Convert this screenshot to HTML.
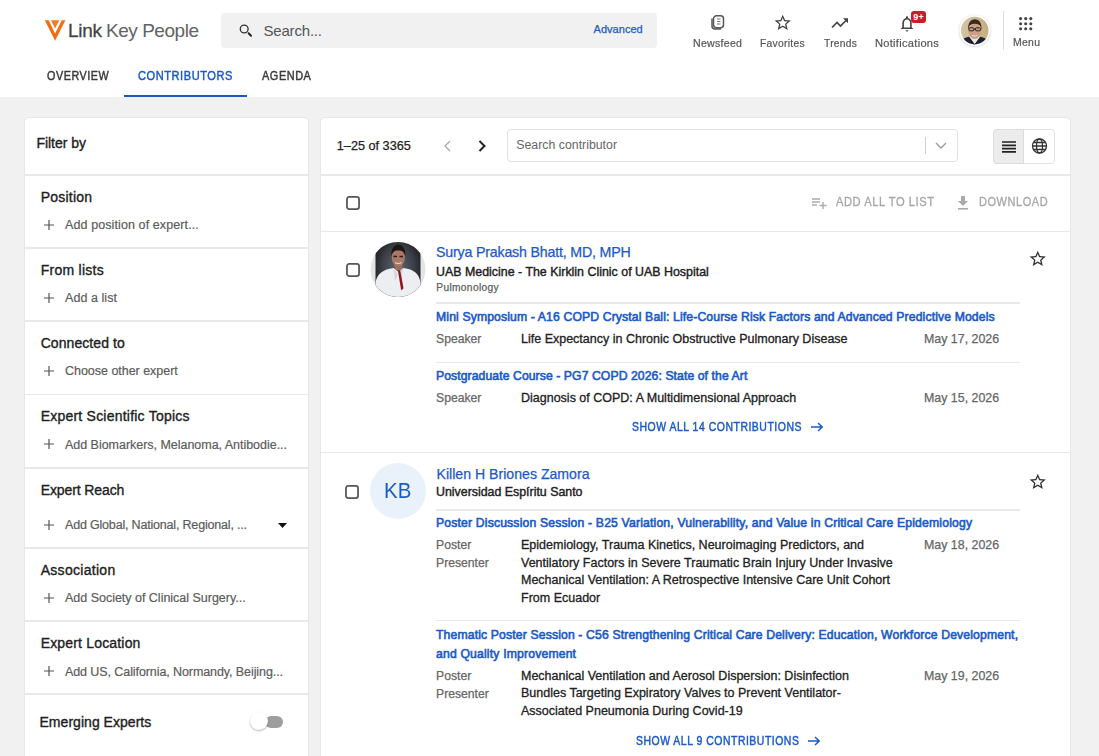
<!DOCTYPE html>
<html><head><meta charset="utf-8"><title>Link Key People - Contributors</title>
<style>
html,body{margin:0;padding:0;}
body{width:1099px;height:756px;overflow:hidden;position:relative;background:#fff;font-family:"Liberation Sans",sans-serif;}
.t{position:absolute;white-space:nowrap;line-height:1;}
.r{position:absolute;display:block;}
</style></head><body>
<div class="r" style="left:0px;top:97px;width:1099px;height:659px;background:#f1f1f1;"></div>
<svg class="r" style="left:43px;top:19px" width="24" height="23" viewBox="0 0 24 23"><path d="M1.8 1.2h3.9l6.4 13.4 6.7-13.4h3.6l-10.3 20.6z" fill="#f06d14"/><path d="M7.9 1.2h8.5l-4.3 8.3z" fill="#f27c24"/></svg>
<div class="t" style="left:68px;top:20.61px;font-size:19px;color:#444;letter-spacing:-0.285px;-webkit-text-stroke:0.3px #444;">Link</div>
<div class="t" style="left:106px;top:20.61px;font-size:19px;color:#626262;letter-spacing:-0.464px;">Key People</div>
<div class="r" style="left:221px;top:13px;width:436px;height:35px;background:#f1f1f1;border-radius:4px;"></div>
<svg class="r" style="left:239px;top:24px" width="14" height="14" viewBox="0 0 14 14"><circle cx="5.2" cy="5" r="3.9" fill="none" stroke="#333" stroke-width="1.35"/><path d="M9.6 9.3l2.4 2.5" stroke="#222" stroke-width="2" stroke-linecap="round"/></svg>
<div class="t" style="left:263.5px;top:23.10px;font-size:15px;color:#555;letter-spacing:-0.191px;">Search...</div>
<div class="t" style="left:593.5px;top:24.49px;font-size:11px;color:#1b5ac6;letter-spacing:0.039px;-webkit-text-stroke:0.25px #1b5ac6;">Advanced</div>
<svg class="r" style="left:709px;top:14px" width="17" height="17" viewBox="0 0 17 17"><rect x="4.5" y="1.8" width="10" height="12" rx="3" fill="none" stroke="#555" stroke-width="1.5"/><path d="M3 4.5v7.5a3 3 0 0 0 3 3h6" fill="none" stroke="#555" stroke-width="1.5"/><path d="M8 5h3.5M8 7.5h3.5M8 10h3.5" stroke="#777" stroke-width="1.2"/></svg>
<div class="t" style="left:692.5px;top:37.99px;font-size:11px;color:#555;letter-spacing:0.3px;-webkit-text-stroke:0.2px #555;transform:scaleX(0.9605);transform-origin:0 0;">Newsfeed</div>
<svg class="r" style="left:773px;top:13px" width="19.5" height="19.5" viewBox="0 0 24 24"><path d="M22 9.24l-7.19-.62L12 2 9.19 8.63 2 9.24l5.46 4.73L5.82 21 12 17.27 18.18 21l-1.63-7.03L22 9.24zM12 15.4l-3.76 2.27 1-4.28-3.32-2.88 4.38-.38L12 6.1l1.71 4.04 4.38.38-3.32 2.88 1 4.28L12 15.4z" fill="#444"/></svg>
<div class="t" style="left:760px;top:37.99px;font-size:11px;color:#555;letter-spacing:0.3px;-webkit-text-stroke:0.2px #555;transform:scaleX(0.9384);transform-origin:0 0;">Favorites</div>
<svg class="r" style="left:831px;top:17px" width="19" height="12" viewBox="0 0 19 12"><path d="M1 10.5l5-5 3.5 3.5 6-6" fill="none" stroke="#444" stroke-width="1.7"/><path d="M12 1.2h5v5z" fill="#444"/></svg>
<div class="t" style="left:824px;top:37.99px;font-size:11px;color:#555;letter-spacing:0.3px;-webkit-text-stroke:0.2px #555;transform:scaleX(0.9285);transform-origin:0 0;">Trends</div>
<svg class="r" style="left:898px;top:14px" width="18" height="18" viewBox="0 0 18 18"><path d="M9 2.2c-.6 0-1 .4-1 1v.7C5.6 4.5 4.3 6.6 4.3 9v4.3L2.6 15h12.8l-1.7-1.7V9c0-2.4-1.3-4.5-3.7-5.1v-.7c0-.6-.4-1-1-1zM5.9 13.6V9c0-2 1.3-3.6 3.1-3.6s3.1 1.6 3.1 3.6v4.6z" fill="#444"/><path d="M7.6 16.2h2.8a1.4 1.4 0 0 1-2.8 0z" fill="#444"/></svg>
<div class="r" style="left:910.8px;top:10.5px;width:15.4px;height:12.2px;background:#c81e25;border-radius:3px;"></div>
<div class="t" style="left:913.3px;top:12.58px;font-size:9px;color:#fff;font-weight:bold;letter-spacing:0.2px;">9+</div>
<div class="t" style="left:875px;top:37.99px;font-size:11px;color:#555;letter-spacing:0.3px;-webkit-text-stroke:0.2px #555;transform:scaleX(1.0045);transform-origin:0 0;">Notifications</div>
<svg class="r" style="left:958px;top:14px" width="34" height="34" viewBox="0 0 34 34"><defs><clipPath id="ac"><circle cx="16.7" cy="16.6" r="13.8"/></clipPath><linearGradient id="abg" x1="0" x2="1"><stop offset="0" stop-color="#d6c8a8"/><stop offset="1" stop-color="#c3ab7c"/></linearGradient><filter id="ash" x="-20%" y="-20%" width="140%" height="140%"><feGaussianBlur stdDeviation="0.8"/></filter></defs><circle cx="16.7" cy="17" r="15.6" fill="#cfcfcf" filter="url(#ash)"/><circle cx="16.7" cy="16.6" r="15.4" fill="#fff"/><g clip-path="url(#ac)"><rect width="34" height="34" fill="url(#abg)"/><path d="M1 32c1-6 5-8.5 10-9.3l5.7 7 5.6-7c5 .8 9 3.3 10 9.3z" fill="#1a2035"/><path d="M11.6 22.6l5.1 7.4 5.1-7.4-2-1h-6.2z" fill="#ece8e2"/><ellipse cx="16.7" cy="17.3" rx="6.2" ry="7.6" fill="#caa086"/><path d="M10.3 16c-.8-7 2.5-10.8 6.5-10.8s7.4 3.4 6.6 10.8l-.9-3.5c-.6-1.6-2.8-2.7-5.7-2.7s-4.9 1.1-5.6 2.7z" fill="#3b2a20"/><g fill="none" stroke="#2a201c" stroke-width="1"><rect x="11" y="13.8" width="4.8" height="3" rx="0.8"/><rect x="17.6" y="13.8" width="4.8" height="3" rx="0.8"/><path d="M15.8 15h1.8"/></g><path d="M14 21.5q2.7 1.4 5.4 0" stroke="#f0ddd0" stroke-width="1" fill="none"/></g></svg>
<div class="r" style="left:1002.5px;top:11px;width:1px;height:39px;background:#dedede;"></div>
<svg class="r" style="left:1019px;top:16.5px" width="14" height="14" viewBox="0 0 14 14"><circle cx="1.6" cy="1.6" r="1.55" fill="#444"/><circle cx="1.6" cy="6.7" r="1.55" fill="#444"/><circle cx="1.6" cy="11.8" r="1.55" fill="#444"/><circle cx="6.7" cy="1.6" r="1.55" fill="#444"/><circle cx="6.7" cy="6.7" r="1.55" fill="#444"/><circle cx="6.7" cy="11.8" r="1.55" fill="#444"/><circle cx="11.8" cy="1.6" r="1.55" fill="#444"/><circle cx="11.8" cy="6.7" r="1.55" fill="#444"/><circle cx="11.8" cy="11.8" r="1.55" fill="#444"/></svg>
<div class="t" style="left:1012.7px;top:37.19px;font-size:11px;color:#555;letter-spacing:0.3px;-webkit-text-stroke:0.2px #555;transform:scaleX(0.9502);transform-origin:0 0;">Menu</div>
<div class="t" style="left:47px;top:70.04px;font-size:12px;color:#3a3a3a;letter-spacing:0.6px;-webkit-text-stroke:0.45px #3a3a3a;transform:scaleX(0.8986);transform-origin:0 0;">OVERVIEW</div>
<div class="t" style="left:138px;top:70.04px;font-size:12px;color:#1b5ac6;letter-spacing:0.6px;-webkit-text-stroke:0.45px #1b5ac6;transform:scaleX(0.9220);transform-origin:0 0;">CONTRIBUTORS</div>
<div class="t" style="left:261.7px;top:70.04px;font-size:12px;color:#3a3a3a;letter-spacing:0.6px;-webkit-text-stroke:0.45px #3a3a3a;transform:scaleX(0.9110);transform-origin:0 0;">AGENDA</div>
<div class="r" style="left:124px;top:95px;width:122.5px;height:2px;background:#1b5ac6;"></div>
<div class="r" style="left:25px;top:118px;width:283px;height:700px;background:#fff;border-radius:4px;box-shadow:0 0 0 1px #e6e6e6, 0 1px 2px rgba(0,0,0,0.06);"></div>
<div class="t" style="left:36.4px;top:136.15px;font-size:14px;color:#212121;letter-spacing:-0.023px;-webkit-text-stroke:0.35px #212121;">Filter by</div>
<div class="r" style="left:25px;top:174px;width:283px;height:1.5px;background:#e8e8e8;"></div>
<div class="r" style="left:25px;top:247px;width:283px;height:1.5px;background:#e8e8e8;"></div>
<div class="r" style="left:25px;top:320px;width:283px;height:1.5px;background:#e8e8e8;"></div>
<div class="r" style="left:25px;top:393.5px;width:283px;height:1.5px;background:#e8e8e8;"></div>
<div class="r" style="left:25px;top:467px;width:283px;height:1.5px;background:#e8e8e8;"></div>
<div class="r" style="left:25px;top:547px;width:283px;height:1.5px;background:#e8e8e8;"></div>
<div class="r" style="left:25px;top:620px;width:283px;height:1.5px;background:#e8e8e8;"></div>
<div class="r" style="left:25px;top:693px;width:283px;height:1.5px;background:#e8e8e8;"></div>
<div class="t" style="left:40.7px;top:189.65px;font-size:14px;color:#212121;letter-spacing:0.213px;-webkit-text-stroke:0.35px #212121;">Position</div>
<svg class="r" style="left:44px;top:219.5px" width="10" height="10" viewBox="0 0 10 10"><path d="M5 0v10M0 5h10" stroke="#555" stroke-width="1.2"/></svg>
<div class="t" style="left:65px;top:219.12px;font-size:12.5px;color:#5c5c5c;letter-spacing:0.103px;-webkit-text-stroke:0.2px #5c5c5c;">Add position of expert...</div>
<div class="t" style="left:40.7px;top:262.65px;font-size:14px;color:#212121;letter-spacing:0.26px;-webkit-text-stroke:0.35px #212121;">From lists</div>
<svg class="r" style="left:44px;top:292.5px" width="10" height="10" viewBox="0 0 10 10"><path d="M5 0v10M0 5h10" stroke="#555" stroke-width="1.2"/></svg>
<div class="t" style="left:65px;top:292.12px;font-size:12.5px;color:#5c5c5c;letter-spacing:0.065px;-webkit-text-stroke:0.2px #5c5c5c;">Add a list</div>
<div class="t" style="left:40.7px;top:335.65px;font-size:14px;color:#212121;letter-spacing:0.065px;-webkit-text-stroke:0.35px #212121;">Connected to</div>
<svg class="r" style="left:44px;top:365.5px" width="10" height="10" viewBox="0 0 10 10"><path d="M5 0v10M0 5h10" stroke="#555" stroke-width="1.2"/></svg>
<div class="t" style="left:65px;top:365.12px;font-size:12.5px;color:#5c5c5c;letter-spacing:-0.026px;-webkit-text-stroke:0.2px #5c5c5c;">Choose other expert</div>
<div class="t" style="left:40.7px;top:409.15px;font-size:14px;color:#212121;letter-spacing:0.22px;-webkit-text-stroke:0.35px #212121;">Expert Scientific Topics</div>
<svg class="r" style="left:44px;top:439.0px" width="10" height="10" viewBox="0 0 10 10"><path d="M5 0v10M0 5h10" stroke="#555" stroke-width="1.2"/></svg>
<div class="t" style="left:65px;top:438.62px;font-size:12.5px;color:#5c5c5c;letter-spacing:-0.028px;-webkit-text-stroke:0.2px #5c5c5c;">Add Biomarkers, Melanoma, Antibodie...</div>
<div class="t" style="left:40.7px;top:482.65px;font-size:14px;color:#212121;letter-spacing:-0.102px;-webkit-text-stroke:0.35px #212121;">Expert Reach</div>
<svg class="r" style="left:44px;top:519.5px" width="10" height="10" viewBox="0 0 10 10"><path d="M5 0v10M0 5h10" stroke="#555" stroke-width="1.2"/></svg>
<div class="t" style="left:65px;top:519.12px;font-size:12.5px;color:#5c5c5c;letter-spacing:-0.185px;-webkit-text-stroke:0.2px #5c5c5c;">Add Global, National, Regional, ...</div>
<div class="t" style="left:40.7px;top:562.65px;font-size:14px;color:#212121;letter-spacing:0.291px;-webkit-text-stroke:0.35px #212121;">Association</div>
<svg class="r" style="left:44px;top:592.5px" width="10" height="10" viewBox="0 0 10 10"><path d="M5 0v10M0 5h10" stroke="#555" stroke-width="1.2"/></svg>
<div class="t" style="left:65px;top:592.12px;font-size:12.5px;color:#5c5c5c;letter-spacing:-0.015px;-webkit-text-stroke:0.2px #5c5c5c;">Add Society of Clinical Surgery...</div>
<div class="t" style="left:40.7px;top:636.15px;font-size:14px;color:#212121;letter-spacing:0.173px;-webkit-text-stroke:0.35px #212121;">Expert Location</div>
<svg class="r" style="left:44px;top:666.0px" width="10" height="10" viewBox="0 0 10 10"><path d="M5 0v10M0 5h10" stroke="#555" stroke-width="1.2"/></svg>
<div class="t" style="left:65px;top:665.62px;font-size:12.5px;color:#5c5c5c;letter-spacing:-0.087px;-webkit-text-stroke:0.2px #5c5c5c;">Add US, California, Normandy, Beijing...</div>
<svg class="r" style="left:277.5px;top:522.5px" width="9" height="5" viewBox="0 0 9 5"><path d="M0 0h9L4.5 5z" fill="#111"/></svg>
<div class="t" style="left:39.5px;top:715.15px;font-size:14px;color:#212121;letter-spacing:0.035px;-webkit-text-stroke:0.35px #212121;">Emerging Experts</div>
<div class="r" style="left:265px;top:715.5px;width:18px;height:12px;background:#9e9e9e;border-radius:6px;"></div>
<div class="r" style="left:249.5px;top:712px;width:18px;height:18px;background:#fff;border-radius:50%;box-shadow:0 1px 2px rgba(0,0,0,0.3);"></div>
<div class="r" style="left:321px;top:118px;width:749px;height:700px;background:#fff;border-radius:4px;box-shadow:0 0 0 1px #e6e6e6, 0 1px 2px rgba(0,0,0,0.06);"></div>
<div class="t" style="left:336.8px;top:139.75px;font-size:12.7px;color:#212121;letter-spacing:-0.007px;-webkit-text-stroke:0.25px #212121;">1–25 of 3365</div>
<svg class="r" style="left:442px;top:140px" width="10" height="12" viewBox="0 0 10 12"><path d="M8 1L3 6l5 5" fill="none" stroke="#aaa" stroke-width="1.4"/></svg>
<svg class="r" style="left:477px;top:140px" width="10" height="12" viewBox="0 0 10 12"><path d="M2.5 1l5 5-5 5" fill="none" stroke="#222" stroke-width="2"/></svg>
<div class="r" style="left:507px;top:129px;width:451px;height:33px;background:#fff;border:1px solid #e2e2e2;border-radius:4px;box-sizing:border-box;"></div>
<div class="t" style="left:516.3px;top:139.19px;font-size:12.3px;color:#666666;letter-spacing:0.013px;">Search contributor</div>
<div class="r" style="left:925px;top:137px;width:1px;height:16.5px;background:#d0d0d0;"></div>
<svg class="r" style="left:935px;top:142px" width="12" height="7" viewBox="0 0 12 7"><path d="M1 1l5 5 5-5" fill="none" stroke="#999" stroke-width="1.3"/></svg>
<div class="r" style="left:993px;top:129px;width:62px;height:34.5px;background:#fff;border:1px solid #e2e2e2;border-radius:4px;box-sizing:border-box;"></div>
<div class="r" style="left:993px;top:129px;width:31px;height:34.5px;background:#ececec;border:1px solid #dcdcdc;border-radius:4px 0 0 4px;box-sizing:border-box;"></div>
<svg class="r" style="left:1001.5px;top:140.5px" width="14" height="12" viewBox="0 0 14 12"><path d="M0 1h14M0 4.3h14M0 7.6h14M0 10.9h14" stroke="#222" stroke-width="1.7"/></svg>
<svg class="r" style="left:1031px;top:138px" width="17" height="16" viewBox="0 0 17 16"><g fill="none" stroke="#333" stroke-width="1.3"><circle cx="8.5" cy="8" r="7"/><ellipse cx="8.5" cy="8" rx="3" ry="7"/><path d="M1.5 8h14M2.5 4.5h12M2.5 11.5h12"/></g></svg>
<div class="r" style="left:321px;top:174px;width:749px;height:1.5px;background:#e8e8e8;"></div>
<svg class="r" style="left:345.6px;top:196px" width="14" height="14" viewBox="0 0 14 14"><rect x="0.95" y="0.95" width="12.1" height="12.1" rx="2.3" fill="none" stroke="#555" stroke-width="1.75"/></svg>
<svg class="r" style="left:811.5px;top:196.5px" width="16" height="12" viewBox="0 0 16 12"><path d="M0 2h8M0 5h8M0 8h5M11 5v7M7.5 8.5h7" stroke="#aaa" stroke-width="1.4"/></svg>
<div class="t" style="left:835.5px;top:196.04px;font-size:12px;color:#a6a6a6;letter-spacing:0.6px;-webkit-text-stroke:0.3px #a6a6a6;transform:scaleX(0.9291);transform-origin:0 0;">ADD ALL TO LIST</div>
<svg class="r" style="left:956.5px;top:195.5px" width="12" height="14" viewBox="0 0 12 14"><path d="M4 0h4v5h3l-5 5-5-5h3z" fill="#aaa"/><rect x="1" y="12" width="10" height="1.6" fill="#aaa"/></svg>
<div class="t" style="left:978.6px;top:196.04px;font-size:12px;color:#a6a6a6;letter-spacing:0.6px;-webkit-text-stroke:0.3px #a6a6a6;transform:scaleX(0.9163);transform-origin:0 0;">DOWNLOAD</div>
<div class="r" style="left:321px;top:230.5px;width:749px;height:1.5px;background:#e8e8e8;"></div>
<svg class="r" style="left:345.6px;top:262.6px" width="14" height="14" viewBox="0 0 14 14"><rect x="0.95" y="0.95" width="12.1" height="12.1" rx="2.3" fill="none" stroke="#555" stroke-width="1.75"/></svg>
<svg class="r" style="left:369.5px;top:241px" width="56" height="57" viewBox="0 0 56 57"><defs><clipPath id="pc"><circle cx="28" cy="28.5" r="27.5"/></clipPath><radialGradient id="pbg" cx="0.5" cy="0.45" r="0.6"><stop offset="0" stop-color="#5d6670"/><stop offset="0.6" stop-color="#3a3f46"/><stop offset="1" stop-color="#17191c"/></radialGradient></defs><circle cx="28" cy="28.5" r="27.5" fill="#e4e4e4"/><g clip-path="url(#pc)"><rect x="5.5" y="0" width="45" height="57" fill="url(#pbg)"/><rect x="24.5" y="20" width="8" height="9" fill="#9c6e5c"/><path d="M5.5 57V42c1-8 6-12 13-14l5-1 5 4 5-4 5 1c7 2 11 6 12 14v15z" fill="#eceef1"/><path d="M23.5 27l4.5 7-3 6zM33 27l-4.5 7 3 6z" fill="#d4d7dc"/><path d="M28 30l2.3-.3 3.2 17.5-2.3 2.3-2.8-17z" fill="#8a1820"/><ellipse cx="28.3" cy="16.5" rx="6.6" ry="8.8" fill="#a87868"/><path d="M21.3 15c-.5-7 3-11.5 7-11.5s7.6 4 7 11.5c-1-3.5-2.5-5.5-7-5.5s-6 2-7 5.5z" fill="#1e1612"/><path d="M23.5 15.5h3.5M29.5 15.5h3.5" stroke="#2a1e1a" stroke-width="1.4"/><path d="M25 21.5q3.3 2 6.6 0" stroke="#e8d6cc" stroke-width="1.1" fill="none"/></g></svg>
<div class="t" style="left:436px;top:244.98px;font-size:14.2px;color:#1b5ac6;letter-spacing:-0.177px;-webkit-text-stroke:0.25px #1b5ac6;">Surya Prakash Bhatt, MD, MPH</div>
<div class="t" style="left:436px;top:265.50px;font-size:12.4px;color:#212121;letter-spacing:0.007px;-webkit-text-stroke:0.4px #212121;">UAB Medicine - The Kirklin Clinic of UAB Hospital</div>
<div class="t" style="left:436.3px;top:282.76px;font-size:10.2px;color:#5e5e5e;letter-spacing:0.34px;-webkit-text-stroke:0.25px #5e5e5e;">Pulmonology</div>
<svg class="r" style="left:1027.5px;top:249.3px" width="19.5" height="19.5" viewBox="0 0 24 24"><path d="M22 9.24l-7.19-.62L12 2 9.19 8.63 2 9.24l5.46 4.73L5.82 21 12 17.27 18.18 21l-1.63-7.03L22 9.24zM12 15.4l-3.76 2.27 1-4.28-3.32-2.88 4.38-.38L12 6.1l1.71 4.04 4.38.38-3.32 2.88 1 4.28L12 15.4z" fill="#333"/></svg>
<div class="r" style="left:436px;top:302px;width:583.5px;height:1.5px;background:#e8e8e8;"></div>
<div class="t" style="left:436px;top:310.77px;font-size:12.2px;color:#1b5ac6;letter-spacing:0.135px;-webkit-text-stroke:0.6px #1b5ac6;">Mini Symposium - A16 COPD Crystal Ball: Life-Course Risk Factors and Advanced Predictive Models</div>
<div class="t" style="left:436px;top:333.17px;font-size:12.2px;color:#666666;-webkit-text-stroke:0.25px #666666;">Speaker</div>
<div class="t" style="left:521px;top:332.92px;font-size:12.5px;color:#212121;-webkit-text-stroke:0.3px #212121;">Life Expectancy in Chronic Obstructive Pulmonary Disease</div>
<div class="t" style="left:924px;top:333.00px;font-size:12.4px;color:#666666;-webkit-text-stroke:0.25px #666666;">May 17, 2026</div>
<div class="r" style="left:436px;top:361.5px;width:583.5px;height:1.5px;background:#e8e8e8;"></div>
<div class="t" style="left:436px;top:369.97px;font-size:12.2px;color:#1b5ac6;letter-spacing:0.085px;-webkit-text-stroke:0.6px #1b5ac6;">Postgraduate Course - PG7 COPD 2026: State of the Art</div>
<div class="t" style="left:436px;top:391.97px;font-size:12.2px;color:#666666;-webkit-text-stroke:0.25px #666666;">Speaker</div>
<div class="t" style="left:521px;top:391.72px;font-size:12.5px;color:#212121;-webkit-text-stroke:0.3px #212121;">Diagnosis of COPD: A Multidimensional Approach</div>
<div class="t" style="left:924px;top:391.80px;font-size:12.4px;color:#666666;-webkit-text-stroke:0.25px #666666;">May 15, 2026</div>
<div class="t" style="left:632px;top:420.84px;font-size:12px;color:#1b5ac6;letter-spacing:0.6px;-webkit-text-stroke:0.45px #1b5ac6;transform:scaleX(0.8704);transform-origin:0 0;">SHOW ALL 14 CONTRIBUTIONS</div>
<svg class="r" style="left:811px;top:422px" width="13" height="10" viewBox="0 0 13 10"><path d="M0 5h11M7 1l4.2 4L7 9" fill="none" stroke="#1b5ac6" stroke-width="1.5"/></svg>
<div class="r" style="left:321px;top:451.5px;width:749px;height:1.5px;background:#e8e8e8;"></div>
<svg class="r" style="left:345.2px;top:484.8px" width="14" height="14" viewBox="0 0 14 14"><rect x="0.95" y="0.95" width="12.1" height="12.1" rx="2.3" fill="none" stroke="#555" stroke-width="1.75"/></svg>
<div class="r" style="left:369.5px;top:463px;width:56px;height:56px;background:#e9f1fa;border-radius:50%;"></div>
<div class="t" style="left:384px;top:480.15px;font-size:22.5px;color:#1b5ac6;transform:scaleX(0.91);transform-origin:0 0;">KB</div>
<div class="t" style="left:436.5px;top:466.81px;font-size:14.1px;color:#1b5ac6;letter-spacing:0.012px;-webkit-text-stroke:0.25px #1b5ac6;">Killen H Briones Zamora</div>
<div class="t" style="left:436px;top:486.30px;font-size:12.4px;color:#212121;letter-spacing:-0.008px;-webkit-text-stroke:0.4px #212121;">Universidad Espíritu Santo</div>
<svg class="r" style="left:1027.5px;top:471.5px" width="19.5" height="19.5" viewBox="0 0 24 24"><path d="M22 9.24l-7.19-.62L12 2 9.19 8.63 2 9.24l5.46 4.73L5.82 21 12 17.27 18.18 21l-1.63-7.03L22 9.24zM12 15.4l-3.76 2.27 1-4.28-3.32-2.88 4.38-.38L12 6.1l1.71 4.04 4.38.38-3.32 2.88 1 4.28L12 15.4z" fill="#333"/></svg>
<div class="r" style="left:436px;top:509px;width:583.5px;height:1.5px;background:#e8e8e8;"></div>
<div class="t" style="left:436px;top:517.07px;font-size:12.2px;color:#1b5ac6;letter-spacing:0.169px;-webkit-text-stroke:0.6px #1b5ac6;">Poster Discussion Session - B25 Variation, Vulnerability, and Value in Critical Care Epidemiology</div>
<div class="t" style="left:436px;top:539.07px;font-size:12.2px;color:#666666;-webkit-text-stroke:0.25px #666666;">Poster</div>
<div class="t" style="left:436px;top:556.97px;font-size:12.2px;color:#666666;-webkit-text-stroke:0.25px #666666;">Presenter</div>
<div class="t" style="left:521px;top:538.72px;font-size:12.5px;color:#212121;-webkit-text-stroke:0.3px #212121;">Epidemiology, Trauma Kinetics, Neuroimaging Predictors, and</div>
<div class="t" style="left:521px;top:556.52px;font-size:12.5px;color:#212121;-webkit-text-stroke:0.3px #212121;">Ventilatory Factors in Severe Traumatic Brain Injury Under Invasive</div>
<div class="t" style="left:521px;top:574.32px;font-size:12.5px;color:#212121;-webkit-text-stroke:0.3px #212121;">Mechanical Ventilation: A Retrospective Intensive Care Unit Cohort</div>
<div class="t" style="left:521px;top:592.12px;font-size:12.5px;color:#212121;-webkit-text-stroke:0.3px #212121;">From Ecuador</div>
<div class="t" style="left:924px;top:538.80px;font-size:12.4px;color:#666666;-webkit-text-stroke:0.25px #666666;">May 18, 2026</div>
<div class="r" style="left:436px;top:619.5px;width:583.5px;height:1.5px;background:#e8e8e8;"></div>
<div class="t" style="left:436px;top:628.67px;font-size:12.2px;color:#1b5ac6;letter-spacing:0.146px;-webkit-text-stroke:0.6px #1b5ac6;">Thematic Poster Session - C56 Strengthening Critical Care Delivery: Education, Workforce Development,</div>
<div class="t" style="left:436px;top:648.47px;font-size:12.2px;color:#1b5ac6;letter-spacing:0.175px;-webkit-text-stroke:0.6px #1b5ac6;">and Quality Improvement</div>
<div class="t" style="left:436px;top:670.07px;font-size:12.2px;color:#666666;-webkit-text-stroke:0.25px #666666;">Poster</div>
<div class="t" style="left:436px;top:687.97px;font-size:12.2px;color:#666666;-webkit-text-stroke:0.25px #666666;">Presenter</div>
<div class="t" style="left:521px;top:669.72px;font-size:12.5px;color:#212121;-webkit-text-stroke:0.3px #212121;">Mechanical Ventilation and Aerosol Dispersion: Disinfection</div>
<div class="t" style="left:521px;top:687.37px;font-size:12.5px;color:#212121;-webkit-text-stroke:0.3px #212121;">Bundles Targeting Expiratory Valves to Prevent Ventilator-</div>
<div class="t" style="left:521px;top:705.02px;font-size:12.5px;color:#212121;-webkit-text-stroke:0.3px #212121;">Associated Pneumonia During Covid-19</div>
<div class="t" style="left:924px;top:669.80px;font-size:12.4px;color:#666666;-webkit-text-stroke:0.25px #666666;">May 19, 2026</div>
<div class="t" style="left:635.6px;top:734.84px;font-size:12px;color:#1b5ac6;letter-spacing:0.6px;-webkit-text-stroke:0.45px #1b5ac6;transform:scaleX(0.8690);transform-origin:0 0;">SHOW ALL 9 CONTRIBUTIONS</div>
<svg class="r" style="left:808px;top:736px" width="13" height="10" viewBox="0 0 13 10"><path d="M0 5h11M7 1l4.2 4L7 9" fill="none" stroke="#1b5ac6" stroke-width="1.5"/></svg>
</body></html>
